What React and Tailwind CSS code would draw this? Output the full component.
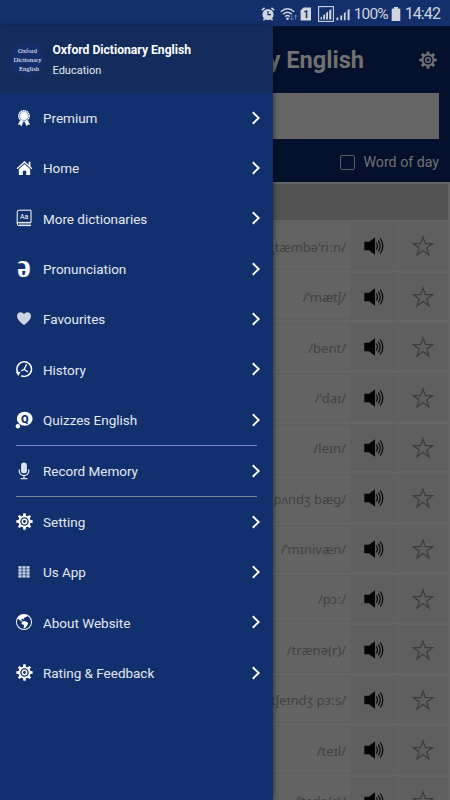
import { BsGlobeAmericas } from 'react-icons/bs';

const teeth = [0, 45, 90, 135, 180, 225, 270, 315];

function Gear({ className }) {
    return (
        <svg viewBox="0 0 24 24" className={className} fill="none" stroke="currentColor">
            <circle cx="12" cy="12" r="7.3" strokeWidth="2.6" />
            <circle cx="12" cy="12" r="3.1" strokeWidth="2" />
            {teeth.map((a) => (
                <path key={a} d="M9.9 4.6 10.3.5h3.4l.4 4.1z" fill="currentColor" stroke="none" transform={`rotate(${a} 12 12)`} />
            ))}
        </svg>
    );
}

function Ribbon() {
    return (
        <svg viewBox="0 0 16 18" className="w-4 h-[18px]" fill="none" stroke="currentColor">
            <circle cx="8" cy="6.9" r="5.2" strokeWidth="1.4" strokeDasharray="1.7 0.34" />
            <circle cx="8" cy="6.9" r="3" strokeWidth="2.6" opacity=".9" />
            <circle cx="8" cy="6.9" r="2.6" fill="currentColor" stroke="none" />
            <path d="M4 11.4 1.9 15.8l2.2-.3 1.2 1.9 2.1-4.6zM12 11.4l2.1 4.4-2.200-.3-1.200 1.900-2.100-4.600z" fill="currentColor" stroke="none" />
        </svg>
    );
}

function House() {
    return (
        <svg viewBox="0 0 18 16" className="w-[17px] h-4" fill="currentColor">
            <path d="M9 .6.7 8.3l.9 1L9 2.5l7.4 6.8.9-1-2-1.9V1.5h-1.800v3.200z" />
            <path d="M3 9.2 9 3.8l6 5.4v6.2h-4.2V11H7.2v4.4H3z" />
        </svg>
    );
}

function Book() {
    return (
        <svg viewBox="0 0 16 18" className="w-4 h-[18px]" fill="none" stroke="currentColor">
            <path d="M15 13.5V1.2H3Q1.2 1.2 1.2 3v12" strokeWidth="1" />
            <path d="M15 13.4H3a1.6 1.6 0 0 0 0 3.2h12" strokeWidth="1" />
            <path d="M3 15h12" strokeWidth="1.3" opacity=".6" />
            <text x="8.2" y="10" textAnchor="middle" fill="currentColor" stroke="none" className="font-[Roboto] text-[7px]">Aa</text>
        </svg>
    );
}

function Schwa() {
    return (
        <svg viewBox="0 0 16 18" className="w-4 h-[18px] overflow-visible" fill="currentColor">
            <text x="1.3" y="16.8" className="font-['Liberation_Serif'] text-[34px] font-bold" textLength="13.5" lengthAdjust="spacingAndGlyphs">ə</text>
        </svg>
    );
}

function Heart() {
    return (
        <svg viewBox="0 0 16 16" className="w-4 h-4 text-[#cdd5e4]" fill="currentColor">
            <path d="M8 14C5 11.6 1 8.6 1 4.9 1 2.7 2.6 1.2 4.6 1.2c1.4 0 2.7.8 3.4 2 .7-1.2 2-2 3.4-2 2 0 3.6 1.5 3.6 3.7 0 3.7-4 6.7-7 9.1z" />
        </svg>
    );
}

function Clock() {
    return (
        <svg viewBox="0 0 18 18" className="w-[18px] h-[18px]" fill="none" stroke="currentColor">
            <path d="M2.8 12.5A7.3 7.3 0 1 1 6.2 15.7" strokeWidth="1.5" />
            <path d="M.6 11.5l4.8.6-2 3.9z" fill="currentColor" stroke="none" />
            <path d="M11.6 4.3 9.2 9.3l3.7 2.7M9.2 9.3l-2.8 1.6" strokeWidth="1.3" />
        </svg>
    );
}

function Quiz() {
    return (
        <svg viewBox="0 0 18 18" className="w-[18px] h-[18px]">
            <ellipse cx="9.7" cy="7.7" rx="7.9" ry="7" fill="currentColor" />
            <circle cx="2.9" cy="15.2" r="2.2" fill="currentColor" />
            <text x="9.7" y="11.6" textAnchor="middle" className="font-[Roboto] text-[11px] font-black fill-[#12306e]">Q</text>
        </svg>
    );
}

function Mic() {
    return (
        <svg viewBox="0 0 16 18" className="w-4 h-[18px] text-[#dce2ee]" fill="none" stroke="currentColor">
            <rect x="5.1" y=".5" width="5.8" height="10.8" rx="2.9" fill="currentColor" stroke="none" />
            <path d="M3.3 7.5v1.8a4.7 4.3 0 0 0 9.4 0V7.5M8 13.8v2.7M4.6 16.6h6.8" strokeWidth="1.3" />
        </svg>
    );
}

function Grid() {
    return (
        <svg viewBox="0 0 12 12" className="w-3 h-3 text-[#ccd4e4]" fill="currentColor">
            {[0, 1, 2, 3].map((r) => [0, 1, 2].map((c) => <rect key={`${r}${c}`} x={0.4 + c * 4} y={0.2 + r * 3} width="3.2" height="2.4" />))}
        </svg>
    );
}

function Chevron() {
    return (
        <svg viewBox="0 0 10 14" className="w-2.5 h-3.5" fill="none" stroke="currentColor" strokeWidth="1.9">
            <path d="M1.8 1.3 7.7 7l-5.9 5.7" />
        </svg>
    );
}

function Speaker() {
    return (
        <svg viewBox="0 0 20 18" className="w-5 h-[18px]" fill="none" stroke="#050505" strokeWidth="1.2">
            <path d="M.3 4.7H5L11 .2v17.6L5 13.3H.3z" fill="#050505" stroke="none" />
            <path d="M12.3 5.5q2.3 3.5 0 7M14.3 3.6q3.7 5.4 0 10.8M16.3 1.5q5 7.5 0 15" />
        </svg>
    );
}

function Star() {
    return (
        <svg viewBox="0 0 22 22" className="w-[22px] h-[22px]" fill="none" stroke="#3c3c3c" strokeWidth="1.2">
            <path d="m11 1.9 2.3 6.8h7.3l-5.9 4.2 2.300 7.1-6-4.400-6 4.400 2.300-7.100-5.900-4.200h7.300z" />
        </svg>
    );
}

function Signal({ boxed }) {
    return (
        <svg viewBox="0 0 16 16" className={boxed ? 'w-4 h-4' : 'w-3.5 h-4'} fill="currentColor">
            {boxed && <rect x=".6" y=".6" width="14.8" height="14.8" fill="none" stroke="currentColor" strokeWidth="1.1" />}
            <path d={boxed ? 'M2.5 13.5v-2l1.5-1v3zM5.2 13.5V9.3l1.9-1.3v5.5zM8.1 13.5V7l1.9-1.5v8zM11.2 13.5V4.5L13.3 3v10.5z' : 'M.5 15v-2.5l2-1V15zM5 15v-5l2-1v6zM9 15V7l2-1.5V15zM13.2 15V3.5l2.3-1.5v13z'} />
        </svg>
    );
}

const menu = [
    { label: 'Premium', icon: <Ribbon /> },
    { label: 'Home', icon: <House /> },
    { label: 'More dictionaries', icon: <Book /> },
    { label: 'Pronunciation', icon: <Schwa /> },
    { label: 'Favourites', icon: <Heart /> },
    { label: 'History', icon: <Clock /> },
    { label: 'Quizzes English', icon: <Quiz /> },
    { label: 'Record Memory', icon: <Mic />, lines: true },
    { label: 'Setting', icon: <Gear className="w-[17px] h-[17px]" /> },
    { label: 'Us App', icon: <Grid /> },
    { label: 'About Website', icon: <BsGlobeAmericas className="w-4 h-4" /> },
    { label: 'Rating & Feedback', icon: <Gear className="w-[17px] h-[17px]" /> },
];

const words = ['/ˌtæmbəˈriːn/', '/ˈmætʃ/', '/bent/', '/ˈdaɪ/', '/leɪn/', '/ˈpaʊndʒ pʌndʒ bæɡ/', '/ˈmɪnivæn/', '/pɔː/', '/trænə(r)/', '/tʃeɪndʒ pɜːs/', '/teɪl/', '/ˈteɪlə(r)/'];

function StatusBar() {
    return (
        <div className="h-[26px] shrink-0 bg-[#132f6c] text-[#cfd4df] flex items-center justify-end pr-[10px] pt-px">
            <svg viewBox="0 0 14 14" className="w-3.5 h-3.5 mr-[5px]" fill="none" stroke="currentColor">
                <circle cx="7" cy="7.5" r="5.6" fill="currentColor" stroke="none" />
                <path d="M.8 3.2 3.6.9M13.2 3.2 10.4.9M2.5 13.3l1.3-1.6M11.5 13.3l-1.3-1.6" strokeWidth="1.6" />
                <path d="M7 4v3.7h3" stroke="#132f6c" strokeWidth="1.2" />
            </svg>
            <svg viewBox="0 0 18 14" className="w-[18px] h-3.5 mr-[2px]" fill="none" stroke="currentColor" strokeWidth="1.4">
                <path d="M.8 4.8q6.7-6.3 13.4 0M3 7.3q4.5-4.2 9 0M5.2 9.6q2.3-2 4.6 0" />
                <circle cx="7.5" cy="11.7" r="1.3" fill="currentColor" stroke="none" />
                <path d="M11.8 8.5v4.2m-1.5-1.3 1.5 1.5 1.5-1.5M15.6 12.5V8.2m-1.5 1.4 1.5-1.5 1.5 1.5" strokeWidth=".8" opacity=".6" />
            </svg>
            <svg viewBox="0 0 12 14" className="w-3 h-3.5 mr-[6px]">
                <path d="M3.5.5H11v13H.6V3.5z" fill="currentColor" />
                <text x="6" y="11" textAnchor="middle" className="font-[Roboto] text-[10px] font-bold fill-[#132f6c]">1</text>
            </svg>
            <Signal boxed />
            <div className="w-[2px]" />
            <Signal />
            <span className="ml-[4px] text-[15.5px] leading-6 w-[35px] whitespace-nowrap tracking-[-0.8px]">100%</span>
            <svg viewBox="0 0 10 14" className="w-2.5 h-3.5 ml-[2px] mr-[4px]" fill="currentColor">
                <path d="M3 0h4v1.5h2.3V14H.7V1.5H3z" />
            </svg>
            <span className="text-base/6 tracking-[-0.9px] whitespace-nowrap">14:42</span>
        </div>
    );
}

function Drawer() {
    return (
        <div className="absolute left-0 top-[26px] bottom-0 w-[273px] bg-[#12306e] text-[#e4e8f0] shadow-[1px_0_5px_rgba(0,0,0,0.45)]">
            <div className="h-[66.5px] bg-[#142c5c] flex items-center pl-[11px]">
                <div className="w-[33px] h-[33px] rounded-full bg-[#132e6b] text-white flex flex-col items-center justify-center font-['Liberation_Serif'] text-[6.5px] leading-[9px] whitespace-nowrap">
                    <span>Oxford</span>
                    <span>Dictionary</span>
                    <span className="ml-[3px]">English</span>
                </div>
                <div className="ml-[8.5px] mt-[3px]">
                    <div className="text-[12.15px] leading-5 font-bold text-white">Oxford Dictionary English</div>
                    <div className="text-[11px] leading-[21px]">Education</div>
                </div>
            </div>
            {menu.map((m) => (
                <div key={m.label} className="px-4">
                    {m.lines && <div className="h-px bg-[#7f84cf]" />}
                    <div className="h-[50.35px] flex items-center">
                        <span className="w-4 flex justify-center text-white *:shrink-0">{m.icon}</span>
                        <span className="ml-[11px] flex-1 text-[13.5px] tracking-[-0.02px] pt-px">{m.label}</span>
                        <span className="text-white -mr-[4px]"><Chevron /></span>
                    </div>
                    {m.lines && <div className="h-px -mb-[0.7px] bg-[#7e859a]" />}
                </div>
            ))}
        </div>
    );
}

export default function App() {
    return (
        <div className="relative w-[450px] h-[800px] overflow-hidden flex flex-col bg-[#646464] font-[Roboto,sans-serif]">
            <StatusBar />
            <div className="h-[156px] shrink-0 bg-[#05112c] text-[#717171] flex flex-col">
                <div className="h-[67px] flex items-center justify-end pr-[13px]">
                    <h1 className="text-[23.6px] font-bold whitespace-nowrap mr-[55px] mt-[3px]">Oxford Dictionary English</h1>
                    <Gear className="w-[18px] h-[18px]" />
                </div>
                <div className="ml-3 mr-[11px] h-[46px] bg-[#666666]" />
                <div className="flex items-center justify-end flex-1 pr-[11px] pt-[4px]">
                    <div className="w-[15px] h-[15px] border-[1.5px] border-[#5a5d63] rounded-xs mr-[8px]" />
                    <span className="text-[14.2px]">Word of day</span>
                </div>
            </div>
            <div className="h-[36px] shrink-0 mt-[2px] mr-[2px] mb-[2.3px] bg-[#535353]" />
            <div className="flex flex-col gap-[3px] pr-[2px]">
                {words.map((w) => (
                    <div key={w} className="h-[47.4px] shrink-0 flex items-stretch border border-[#5c5e5f] rounded-xs bg-[#636363]">
                        <div className="flex-1 flex items-center justify-end pr-[4px] pt-[3px] text-[13px] text-[#424242] font-['Noto_Sans',sans-serif] whitespace-nowrap">{w}</div>
                        <div className="w-[48px] bg-[#605f5f] flex items-center justify-center pt-px"><Speaker /></div>
                        <div className="w-[49px] border-l border-[#646464] bg-[#605f5f] flex items-center justify-center pt-px"><Star /></div>
                    </div>
                ))}
            </div>
            <Drawer />
        </div>
    );
}
